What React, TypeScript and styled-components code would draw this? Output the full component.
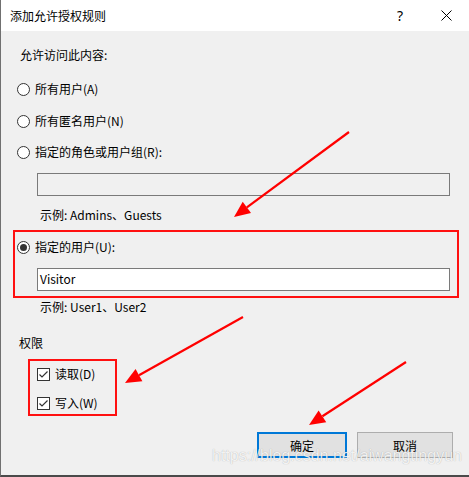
import React from 'react';
import styled, { createGlobalStyle } from 'styled-components';

const GlobalStyle = createGlobalStyle`
  html, body {
    margin: 0;
    padding: 0;
    background: #f0f0f0;
  }
  body {
    font-family: "Noto Sans CJK SC", "Noto Sans", sans-serif;
    font-size: 12px;
    color: #000;
  }
`;

const Stage = styled.div`
  position: relative;
  width: 469px;
  height: 477px;
  overflow: hidden;
`;

const Window = styled.div`
  width: 469px;
  height: 477px;
  box-sizing: border-box;
  border-left: 1px solid #707070;
  border-bottom: 2px solid #4a4a4a;
  background: #f0f0f0;
  display: flex;
  flex-direction: column;
`;

const TitleBar = styled.div`
  height: 31px;
  flex-shrink: 0;
  background: #fff;
  display: flex;
  align-items: center;
  padding-left: 9px;
`;

const Caption = styled.div`
  flex: 1;
  font-size: 12px;
  line-height: 16px;
`;

const CaptionButton = styled.div`
  width: 46px;
  height: 31px;
  display: flex;
  align-items: center;
  justify-content: center;
  font-family: "Noto Sans", sans-serif;
  font-size: 14px;
`;

const Body = styled.div`
  display: flex;
  flex-direction: column;
  align-items: flex-start;
  padding-left: 16px;
`;

const Text = styled.div<{ $top: number; $left?: number }>`
  margin-top: ${({ $top }) => $top}px;
  margin-left: ${({ $left = 0 }) => $left}px;
  line-height: 16px;
  height: 16px;
  white-space: nowrap;
`;

const OptionRow = styled.label<{ $top: number; $left?: number }>`
  display: flex;
  align-items: center;
  height: 16px;
  margin-top: ${({ $top }) => $top}px;
  margin-left: ${({ $left = 0 }) => $left}px;
  line-height: 16px;
  white-space: nowrap;
`;

const Radio = styled.span<{ $checked?: boolean }>`
  width: 13px;
  height: 13px;
  box-sizing: border-box;
  border: 1px solid #333;
  border-radius: 50%;
  background: #fff;
  margin-right: 5px;
  display: flex;
  align-items: center;
  justify-content: center;

  &::after {
    content: '';
    display: ${({ $checked }) => ($checked ? 'block' : 'none')};
    width: 7px;
    height: 7px;
    border-radius: 50%;
    background: #333;
  }
`;

const Checkbox = styled.span`
  width: 13px;
  height: 13px;
  box-sizing: border-box;
  border: 1px solid #333;
  background: #fff;
  margin-right: 5px;
  display: flex;
  align-items: center;
  justify-content: center;
`;

const TextBox = styled.div<{ $top: number; $disabled?: boolean }>`
  margin-top: ${({ $top }) => $top}px;
  margin-left: 20px;
  width: 413px;
  height: 23px;
  box-sizing: border-box;
  border: 1px solid #7a7a7a;
  background: ${({ $disabled }) => ($disabled ? '#f0f0f0' : '#fff')};
  padding-left: 2px;
  line-height: 20px;
`;

const Highlight = styled.div<{ $top: number; $left: number; $width: number; $pad: string }>`
  margin-top: ${({ $top }) => $top}px;
  margin-left: ${({ $left }) => $left}px;
  width: ${({ $width }) => $width}px;
  box-sizing: border-box;
  border: 2px solid #ff1010;
  padding: ${({ $pad }) => $pad};
  display: flex;
  flex-direction: column;
  align-items: flex-start;
`;

const ButtonRow = styled.div`
  margin-top: 16px;
  align-self: stretch;
  display: flex;
  justify-content: flex-end;
  gap: 10px;
  padding-right: 16px;
`;

const Button = styled.div<{ $primary?: boolean; $width: number }>`
  width: ${({ $width }) => $width}px;
  height: 26px;
  box-sizing: border-box;
  background: #e1e1e1;
  border: ${({ $primary }) => ($primary ? '2px solid #0078d7' : '1px solid #adadad')};
  display: flex;
  align-items: center;
  justify-content: center;
`;

const Overlay = styled.svg`
  position: absolute;
  left: 0;
  top: 0;
  pointer-events: none;
`;

const Watermark = styled.div`
  position: absolute;
  left: 212px;
  top: 448px;
  font-family: "Liberation Sans", Arial, sans-serif;
  font-size: 16px;
  line-height: 16px;
  color: rgba(255, 255, 255, 0.85);
  text-shadow: 0 0 1px rgba(0, 0, 0, 0.3);
  white-space: nowrap;
  pointer-events: none;
`;

const arrows = [
  { from: [349, 132], to: [234, 217] },
  { from: [243, 317], to: [125, 383] },
  { from: [406, 362], to: [309, 425] },
];

const Arrow: React.FC<{ from: number[]; to: number[] }> = ({ from, to }) => {
  const dx = to[0] - from[0];
  const dy = to[1] - from[1];
  const len = Math.hypot(dx, dy);
  const ux = dx / len;
  const uy = dy / len;
  const L = 16;
  const W = 7;
  const bx = to[0] - ux * L;
  const by = to[1] - uy * L;
  const p1 = `${bx - uy * W},${by + ux * W}`;
  const p2 = `${bx + uy * W},${by - ux * W}`;
  return (
    <>
      <line x1={from[0]} y1={from[1]} x2={bx} y2={by} stroke="#ff0000" strokeWidth={2.2} />
      <polygon points={`${to[0]},${to[1]} ${p1} ${p2}`} fill="#ff0000" />
    </>
  );
};

const CheckMark = () => (
  <svg width="11" height="11" viewBox="0 0 11 11">
    <path d="M1.5 5.5 L4 8 L9.5 2.5" fill="none" stroke="#333" strokeWidth="1.2" />
  </svg>
);

const CloseIcon = () => (
  <svg width="11" height="11" viewBox="0 0 11 11">
    <path d="M0.5 0.5 L10.5 10.5 M10.5 0.5 L0.5 10.5" stroke="#000" strokeWidth="1" />
  </svg>
);

export default function App() {
  return (
    <Stage>
      <GlobalStyle />
      <Window>
        <TitleBar>
          <Caption>添加允许授权规则</Caption>
          <CaptionButton>?</CaptionButton>
          <CaptionButton>
            <CloseIcon />
          </CaptionButton>
        </TitleBar>
        <Body>
          <Text $top={16} $left={3}>允许访问此内容:</Text>
          <OptionRow $top={18}>
            <Radio />
            所有用户(A)
          </OptionRow>
          <OptionRow $top={16}>
            <Radio />
            所有匿名用户(N)
          </OptionRow>
          <OptionRow $top={15}>
            <Radio />
            指定的角色或用户组(R):
          </OptionRow>
          <TextBox $top={13} $disabled />
          <Text $top={11} $left={23}>示例: Admins、Guests</Text>

          <Highlight $top={7} $left={-4} $width={446} $pad="7px 0 5px 2px">
            <OptionRow $top={0}>
              <Radio $checked />
              指定的用户(U):
            </OptionRow>
            <TextBox $top={13}>Visitor</TextBox>
          </Highlight>
          <Text $top={1} $left={23}>示例: User1、User2</Text>

          <Text $top={20} $left={2}>权限</Text>
          <Highlight $top={8} $left={11} $width={89} $pad="5px 0 3px 7px">
            <OptionRow $top={0}>
              <Checkbox>
                <CheckMark />
              </Checkbox>
              读取(D)
            </OptionRow>
            <OptionRow $top={13}>
              <Checkbox>
                <CheckMark />
              </Checkbox>
              写入(W)
            </OptionRow>
          </Highlight>

          <ButtonRow>
            <Button $primary $width={90}>确定</Button>
            <Button $width={96}>取消</Button>
          </ButtonRow>
        </Body>
      </Window>
      <Overlay width="469" height="477" viewBox="0 0 469 477">
        {arrows.map((a, i) => (
          <Arrow key={i} from={a.from} to={a.to} />
        ))}
      </Overlay>
      <Watermark>https://blog.csdn.net/aiwangtingyun</Watermark>
    </Stage>
  );
}
